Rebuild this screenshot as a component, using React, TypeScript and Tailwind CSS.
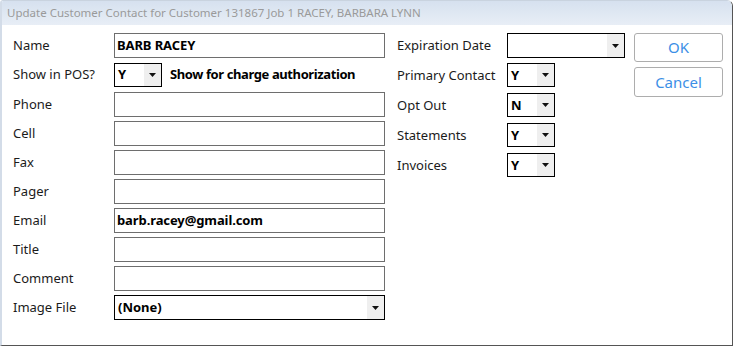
import React from "react";

const font = { fontFamily: '"Noto Sans", "Open Sans", sans-serif' };

function Arrow() {
  return (
    <div className="w-[17px] self-stretch bg-[#efefef] flex items-center justify-center">
      <svg width="7" height="4" viewBox="0 0 7 4">
        <path d="M0 0 H7 L3.5 4 Z" fill="#111" />
      </svg>
    </div>
  );
}

function Select({ value, w, h = 24 }: { value: string; w: string; h?: number }) {
  return (
    <div
      className={`${w} flex border border-black bg-white`}
      style={{ height: h }}
    >
      <div className="flex-1 flex items-center pl-[3px] text-[13px] font-bold text-black leading-none">
        {value}
      </div>
      <Arrow />
    </div>
  );
}

function Input({ value }: { value?: string }) {
  return (
    <div className="w-[271px] h-[25px] border border-[#6e6e6e] bg-white flex items-center pl-[2px] text-[13px] font-bold text-black leading-none tracking-[-0.1px]">
      {value}
    </div>
  );
}

function Row({ label, children, cls = "" }: { label: string; children: React.ReactNode; cls?: string }) {
  return (
    <div className={`flex items-center h-[25px] ${cls}`}>
      <div className="w-[101px] text-[13px] text-[#1b1b1b] leading-none">{label}</div>
      {children}
    </div>
  );
}

function RRow({ label, children, mt }: { label: string; children: React.ReactNode; mt: string }) {
  return (
    <div className={`flex items-center ${mt}`}>
      <div className="w-[110px] text-[13px] text-[#1b1b1b] leading-none">{label}</div>
      {children}
    </div>
  );
}

export default function App() {
  return (
    <div className="w-[735px] h-[348px] bg-white" style={font}>
      <div className="w-[733px] h-[346px] flex flex-col border-l-2 border-l-[#d3dce8] border-r border-r-[#555] border-b border-b-[#555] border-t border-t-[#c9d3df] rounded-tl-[3px] rounded-tr-[6px] overflow-hidden">
        <div className="h-[24px] bg-gradient-to-b from-[#d6e1ef] to-[#e8eef6] flex items-center pl-[5px] text-[11.5px] text-[#9a9a9a] leading-none">
          Update Customer Contact for Customer 131867 Job 1 RACEY, BARBARA LYNN
        </div>
        <div className="flex-1 bg-white flex pt-[8px] pl-[11px]">
          <div className="flex flex-col gap-[4px]">
            <Row label="Name">
              <Input value="BARB RACEY" />
            </Row>
            <Row label="Show in POS?">
              <Select value="Y" w="w-[48px]" />
              <div className="ml-[8px] text-[13px] font-bold text-black leading-none tracking-[-0.4px]">
                Show for charge authorization
              </div>
            </Row>
            <Row label="Phone" cls="mt-[1px]">
              <Input />
            </Row>
            <Row label="Cell">
              <Input />
            </Row>
            <Row label="Fax">
              <Input />
            </Row>
            <Row label="Pager">
              <Input />
            </Row>
            <Row label="Email">
              <Input value="barb.racey@gmail.com" />
            </Row>
            <Row label="Title">
              <Input />
            </Row>
            <Row label="Comment">
              <Input />
            </Row>
            <Row label="Image File">
              <Select value="(None)" w="w-[271px]" h={25} />
            </Row>
          </div>
          <div className="flex flex-col ml-[12px]">
            <RRow label="Expiration Date" mt="mt-0">
              <Select value="" w="w-[118px]" h={25} />
            </RRow>
            <RRow label="Primary Contact" mt="mt-[5px]">
              <Select value="Y" w="w-[48px]" />
            </RRow>
            <RRow label="Opt Out" mt="mt-[6px]">
              <Select value="N" w="w-[48px]" />
            </RRow>
            <RRow label="Statements" mt="mt-[6px]">
              <Select value="Y" w="w-[48px]" />
            </RRow>
            <RRow label="Invoices" mt="mt-[6px]">
              <Select value="Y" w="w-[48px]" />
            </RRow>
          </div>
          <div className="flex flex-col ml-[9px] gap-[5px]">
            <button className="w-[89px] h-[29px] rounded-[3px] border border-[#adadad] bg-white text-[15px] text-[#3c8fe6] leading-none">
              OK
            </button>
            <button className="w-[89px] h-[30px] rounded-[3px] border border-[#adadad] bg-white text-[15px] text-[#3c8fe6] leading-none">
              Cancel
            </button>
          </div>
        </div>
      </div>
    </div>
  );
}
